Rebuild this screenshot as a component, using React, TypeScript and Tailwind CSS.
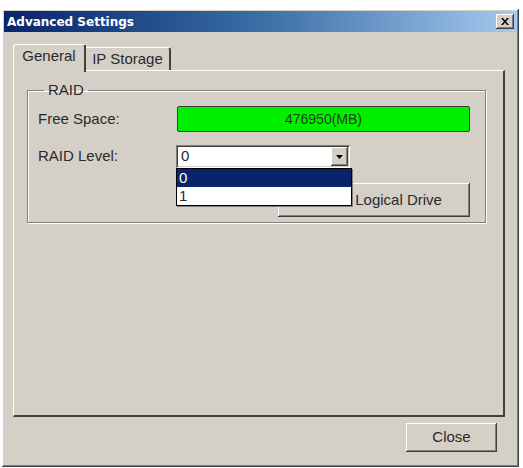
import { useState } from "react";

const raised =
  "shadow-[inset_-1px_-1px_#404040,inset_1px_1px_#ffffff,inset_-2px_-2px_#808080,inset_2px_2px_#d4d0c8]";
const sunken =
  "shadow-[inset_1px_1px_#808080,inset_-1px_-1px_#ffffff,inset_2px_2px_#404040,inset_-2px_-2px_#d4d0c8]";

export default function App() {
  const [tab, setTab] = useState("general");
  const [level, setLevel] = useState("0");

  return (
    <div
      className="w-[523px] h-[468px] bg-white pt-[9px] pl-[2px] text-[15px] text-[#2a2a2a]"
      style={{ fontFamily: '"Liberation Sans", Arial, sans-serif' }}
    >
      <div className={`w-[517px] h-[458px] bg-[#d4d0c8] p-[2px] flex flex-col ${raised}`}>
        {/* Title bar */}
        <div className="h-[21px] flex items-center justify-between pl-[3px] pr-[3px] bg-gradient-to-r from-[#0a246a] via-[#3a6ea5] to-[#a6caf0]">
          <span
            className="text-white font-bold text-[12px] leading-none"
            style={{ fontFamily: '"DejaVu Sans", Verdana, sans-serif' }}
          >
            Advanced Settings
          </span>
          <button
            className={`w-[18px] h-[15px] bg-[#d4d0c8] flex items-center justify-center ${raised}`}
          >
            <svg width="8" height="7" viewBox="0 0 8 7">
              <path d="M0 0h2l2 2.5L6 0h2L5 3.5 8 7H6L4 4.5 2 7H0l3-3.5z" fill="#000" />
            </svg>
          </button>
        </div>

        {/* Body */}
        <div className="flex-1 flex flex-col pt-[12px] pl-[9px] pr-[12px]">
          {/* Tabs */}
          <div className="flex items-end h-[26px]">
            <button
              onClick={() => setTab("general")}
              className={`relative z-10 h-[28px] -mb-[2px] w-[73px] pb-[4px] bg-[#d4d0c8] rounded-t-[3px] border-t border-l border-white border-r-2 border-r-[#404040] ${
                tab === "general" ? "" : ""
              }`}
            >
              General
            </button>
            <button
              onClick={() => setTab("ip")}
              className="h-[23px] w-[85px] bg-[#d4d0c8] rounded-tr-[3px] border-t border-white border-r-2 border-r-[#404040] pb-[1px]"
            >
              IP Storage
            </button>
          </div>

          {/* Panel */}
          <div className="h-[347px] border-t border-l border-white border-r-2 border-b-2 border-r-[#404040] border-b-[#404040] pl-[13px] pr-[17px] pt-[10px]">
            <fieldset className="h-[142px] border border-[#808080] shadow-[1px_1px_0_#ffffff,inset_1px_1px_0_#ffffff] pl-[10px] pr-[15px]">
              <legend className="ml-[6px] px-[4px] leading-[18px]">RAID</legend>
              <div className="flex items-center mt-[7px]">
                <span className="w-[139px]">Free Space:</span>
                <div className="w-[293px] h-[26px] bg-[#00f000] border border-[#3a3a3a] rounded-[2px] flex items-center justify-center text-[#1f3f1f] text-[14px]">
                  476950(MB)
                </div>
              </div>
              <div className="flex items-center mt-[13px]">
                <span className="w-[138px]">RAID Level:</span>
                <div className="relative">
                  <div className={`w-[174px] h-[23px] bg-white flex items-center ${sunken} p-[2px]`}>
                    <span className="flex-1 pl-[3px]">{level}</span>
                    <div className={`w-[17px] h-[19px] bg-[#d4d0c8] flex items-center justify-center ${raised}`}>
                      <svg width="7" height="4" viewBox="0 0 7 4">
                        <path d="M0 0h7L3.5 4z" fill="#000" />
                      </svg>
                    </div>
                  </div>
                  <div className="absolute left-0 top-[23px] w-[176px] z-20 bg-white border border-[#000] shadow-[1px_1px_0_#808080] leading-[17px]">
                    {["0", "1"].map((v) => (
                      <div
                        key={v}
                        onClick={() => setLevel(v)}
                        className={`h-[18px] pl-[2px] ${
                          v === level ? "bg-[#0a246a] text-white" : "bg-white text-[#2a2a2a]"
                        }`}
                      >
                        {v}
                      </div>
                    ))}
                  </div>
                </div>
              </div>
              <div className="flex justify-end mt-[15px]">
                <button className={`w-[192px] h-[34px] bg-[#d4d0c8] ${raised}`}>
                  Create Logical Drive
                </button>
              </div>
            </fieldset>
          </div>

          {/* Footer */}
          <div className="flex justify-end mt-[6px] pr-[8px]">
            <button className={`w-[91px] h-[29px] bg-[#d4d0c8] ${raised}`}>Close</button>
          </div>
        </div>
      </div>
    </div>
  );
}
